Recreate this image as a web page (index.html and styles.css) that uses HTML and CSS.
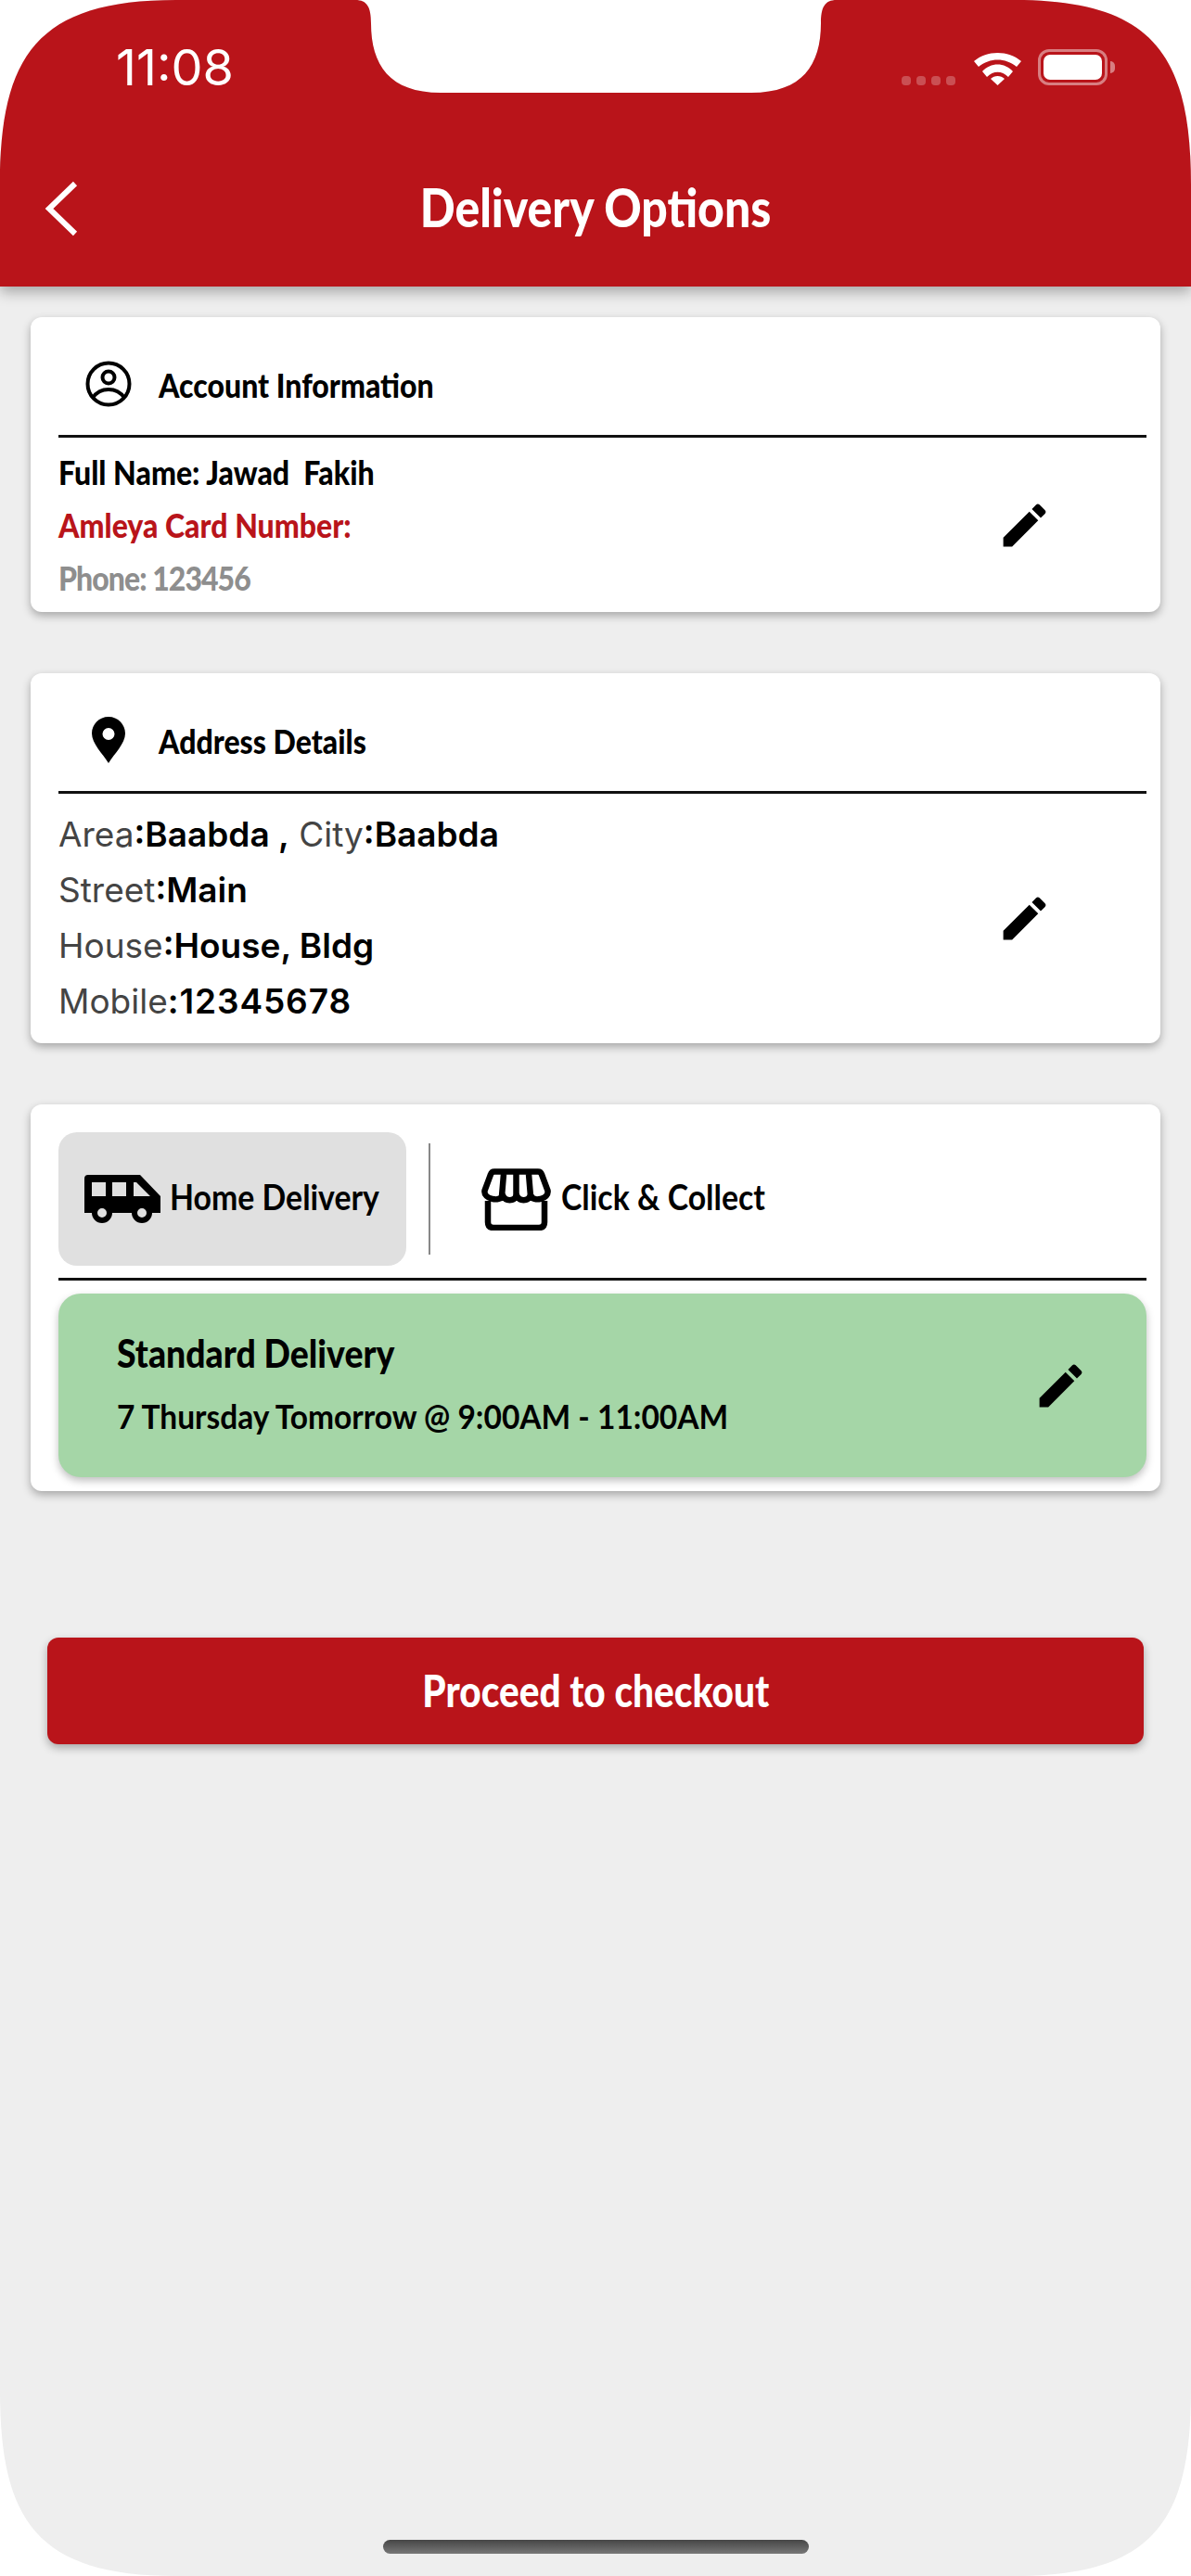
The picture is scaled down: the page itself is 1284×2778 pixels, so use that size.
FILE: index.html
```html
<!DOCTYPE html>
<html lang="en">
<head>
<meta charset="utf-8">
<title>Delivery Options</title>
<link rel="stylesheet" href="styles.css">
</head>
<body>
<div class="screen">
  <header class="topbar">
    <div class="status">
      <span class="time">11:08</span>
      <div class="status-icons">
        <div class="signal"><i></i><i></i><i></i><i></i></div>
        <svg class="wifi" viewBox="0 0 51 35"><path d="M0 9C14-3 37-3 51 9L46 15C34 5 17 5 5 15Z" fill="#fff"/><path d="M9 20C18 10 33 10 42 20L37 26C30 19 21 19 14 26Z" fill="#fff"/><path d="M18 28C22 24 29 24 33 28L25.500 35Z" fill="#fff"/></svg>
        <div class="battery"><div class="battery-fill"></div></div>
      </div>
    </div>
    <div class="navrow">
      <svg class="back" viewBox="0 0 36 60"><path d="M33 3L5 30l28 27" fill="none" stroke="#fff" stroke-width="6"/></svg>
      <h1 class="title">Delivery Options</h1>
    </div>
  </header>

  <main class="content">
    <section class="card card-account">
      <div class="card-head">
        <svg class="head-icon" viewBox="0 0 50 50"><circle cx="25" cy="25" r="22.500" fill="none" stroke="#000" stroke-width="4"/><circle cx="25" cy="18" r="6.500" fill="none" stroke="#000" stroke-width="4"/><path d="M8 40c4-6 10-9 17-9s13 3 17 9" fill="none" stroke="#000" stroke-width="4"/></svg>
        <h2 class="card-title condensed">Account Information</h2>
      </div>
      <div class="card-body">
        <div class="rows account-rows">
          <p class="acct condensed">Full Name: Jawad&nbsp; Fakih</p>
          <p class="acct acct-red condensed">Amleya Card Number:</p>
          <p class="acct acct-gray condensed">Phone: 123456</p>
        </div>
        <svg class="pencil" viewBox="0 0 24 24"><path d="M3 17.25V21h3.75L17.81 9.94l-3.75-3.75L3 17.25zM20.71 7.04a1 1 0 0 0 0-1.41l-2.34-2.34a1 1 0 0 0-1.41 0l-1.83 1.83 3.75 3.75 1.83-1.83z"/></svg>
      </div>
    </section>

    <section class="card card-address">
      <div class="card-head">
        <svg class="head-icon pin" viewBox="0 0 36 50"><path fill-rule="evenodd" d="M18 0C8 0 0 8 0 18c0 11 12 22 18 32 6-10 18-21 18-32C36 8 28 0 18 0zm0 12a6.500 6.500 0 1 1 0 13 6.500 6.500 0 0 1 0-13z"/></svg>
        <h2 class="card-title condensed">Address Details</h2>
      </div>
      <div class="card-body">
        <div class="rows address-rows">
          <p class="addr">Area<b>:Baabda ,</b> City<b>:Baabda</b></p>
          <p class="addr">Street<b>:Main</b></p>
          <p class="addr">House<b>:House, Bldg</b></p>
          <p class="addr">Mobile<b class="addr-num">:12345678</b></p>
        </div>
        <svg class="pencil" viewBox="0 0 24 24"><path d="M3 17.25V21h3.75L17.81 9.94l-3.75-3.75L3 17.25zM20.71 7.04a1 1 0 0 0 0-1.41l-2.34-2.34a1 1 0 0 0-1.41 0l-1.83 1.83 3.75 3.75 1.83-1.83z"/></svg>
      </div>
    </section>

    <section class="card card-delivery">
      <div class="tabs">
        <div class="tab tab-active">
          <svg class="truck" viewBox="0 0 82 52"><path fill-rule="evenodd" d="M4 0H60L82 23V41H0V4Q0 0 4 0ZM8 8V23H23V8ZM30 8V23H45V8ZM53 8V23H71L56 8Z"/><circle cx="19" cy="41" r="8" fill="#e0e0e0" stroke="#000" stroke-width="6"/><circle cx="62" cy="41" r="8" fill="#e0e0e0" stroke="#000" stroke-width="6"/></svg>
          <span class="tab-label condensed">Home Delivery</span>
        </div>
        <div class="tab-sep"></div>
        <div class="tab tab-plain">
          <svg class="store" viewBox="0 0 75 67"><g fill="none" stroke="#000" stroke-width="6.500" stroke-linejoin="round"><path d="M14 3.500H61Q64 3.500 65 6.500L71.500 24C73 33 56 37 53 29C50 36 41 36 38 29C35 36 26 36 23 29C20 37 2 33 3.500 24L10 6.500Q11 3.500 14 3.500Z"/><path d="M24 6L22 30M37.500 6V30M51 6L53 30"/><path d="M7 35V58Q7 64 13 64H62Q68 64 68 58V35"/></g></svg>
          <span class="tab-label condensed">Click &amp; Collect</span>
        </div>
      </div>
      <div class="slot">
        <div class="slot-text">
          <p class="slot-name condensed">Standard Delivery</p>
          <p class="slot-time condensed">7 Thursday Tomorrow @ 9:00AM - 11:00AM</p>
        </div>
        <svg class="pencil" viewBox="0 0 24 24"><path d="M3 17.25V21h3.75L17.81 9.94l-3.75-3.75L3 17.25zM20.71 7.04a1 1 0 0 0 0-1.41l-2.34-2.34a1 1 0 0 0-1.41 0l-1.83 1.83 3.75 3.75 1.83-1.83z"/></svg>
      </div>
    </section>

    <button class="checkout"><span class="checkout-label">Proceed to checkout</span></button>
  </main>
  <div class="home-bar"></div>
</div>
</body>
</html>
```
FILE: styles.css
```css
* { box-sizing: border-box; }
html, body { margin: 0; padding: 0; background: #fff; }
p, h1, h2 { margin: 0; }

.screen {
  position: relative;
  width: 1284px;
  height: 2778px;
  background: #eee;
  overflow: hidden;
  clip-path: path("M0 200C0 60 40 0 190 0H383C396 0 400 8 400 25C400 70 420 100 475 100H810C865 100 885 70 885 25C885 8 889 0 902 0H1094C1244 0 1284 60 1284 200V2578C1284 2718 1244 2778 1094 2778H190C40 2778 0 2718 0 2578Z");
  font-family: "Lato", "Liberation Sans", sans-serif;
}

.condensed {
  transform: scaleX(.89);
  transform-origin: left center;
  white-space: nowrap;
}

.topbar {
  position: relative;
  height: 309px;
  background: #b9141a;
  box-shadow: 0 6px 14px rgba(0,0,0,.3);
  color: #fff;
}
.status {
  display: flex;
  justify-content: space-between;
  align-items: center;
  height: 92px;
  padding: 53px 90px 0 125px;
}
.time { font-family: "Inter", sans-serif; font-size: 54px; font-weight: 400; line-height: 39px; }
.status-icons { display: flex; align-items: center; }
.signal { display: flex; gap: 6px; align-self: flex-end; margin-right: 20px; }
.signal i { width: 10px; height: 10px; border-radius: 4px; background: rgba(255,255,255,.25); }
.wifi { width: 51px; height: 35px; margin-right: 18px; margin-top: 4px; }
.battery {
  position: relative;
  width: 75px;
  height: 39px;
  border: 3px solid rgba(255,255,255,.45);
  border-radius: 12px;
  padding: 3px;
}
.battery::after {
  content: "";
  position: absolute;
  right: -11px;
  top: 10px;
  width: 5px;
  height: 13px;
  border-radius: 0 6px 6px 0;
  background: rgba(255,255,255,.45);
}
.battery-fill { height: 100%; background: #fff; border-radius: 7px; }

.navrow {
  position: relative;
  display: flex;
  justify-content: center;
  align-items: center;
  height: 70px;
  margin-top: 93px;
}
.back { position: absolute; left: 48px; top: 10px; width: 36px; height: 60px; }
.title { font-size: 58px; font-weight: 900; line-height: 70px; padding-top: 6px; transform: scaleX(.86); white-space: nowrap; }

.content {
  display: flex;
  flex-direction: column;
  padding: 33px 33px 0;
}
.card {
  display: flex;
  flex-direction: column;
  background: #fff;
  border-radius: 12px;
  box-shadow: 0 4px 10px rgba(0,0,0,.3);
  padding: 0 15px 0 30px;
}
.card-account { height: 318px; }
.card-address { height: 399px; margin-top: 66px; }
.card-delivery { height: 417px; margin-top: 66px; padding-top: 30px; }

.card-head {
  display: flex;
  align-items: center;
  flex: none;
  height: 130px;
  padding: 13px 0 0 29px;
  border-bottom: 3px solid #111;
}
.head-icon { width: 50px; height: 50px; margin: 4px 29px 0 0; flex: none; }
.head-icon.pin { width: 36px; margin-left: 7px; margin-right: 36px; }
.card-title { font-size: 36px; font-weight: 900; color: #000; padding-top: 6px; }
.card-body { display: flex; flex: 1; align-items: center; justify-content: space-between; padding-right: 101px; }
.rows { align-self: flex-start; }
.account-rows { padding-top: 9px; }
.acct { font-size: 36px; font-weight: 900; line-height: 57px; color: #000; }
.acct-red { color: #b9141a; }
.acct-gray { color: #8e8e8e; letter-spacing: -1.1px; }
.address-rows { padding-top: 14px; }
.addr { font-family: "Inter", sans-serif; font-size: 37px; line-height: 60px; color: #444; }
.addr b { font-weight: 600; color: #000; }
.addr .addr-num { letter-spacing: .9px; }
.pencil { width: 61px; height: 61px; flex: none; fill: #000; }

.tabs { display: flex; flex: none; align-items: center; height: 160px; border-bottom: 3px solid #111; padding-bottom: 13px; }
.tab { display: flex; align-items: center; }
.tab-active { width: 375px; height: 144px; background: #e0e0e0; border-radius: 20px; padding-left: 28px; }
.tab-sep { width: 2px; height: 120px; background: #888; margin: 0 55px 0 24px; }
.truck { width: 82px; height: 52px; margin-right: 10px; flex: none; }
.store { width: 75px; height: 67px; margin-right: 11px; flex: none; }
.tab-label { font-size: 38px; font-weight: 700; color: #000; padding-bottom: 6px; }

.slot {
  display: flex;
  flex: none;
  align-items: center;
  justify-content: space-between;
  height: 198px;
  margin-top: 14px;
  padding: 0 62px 0 63px;
  background: #a5d6a7;
  border-radius: 24px;
  box-shadow: 0 4px 8px rgba(0,0,0,.25);
}
.slot-text { padding-bottom: 3px; }
.slot-name { font-size: 42px; font-weight: 900; line-height: 50px; color: #000; }
.slot-time { font-size: 37px; font-weight: 700; line-height: 50px; margin-top: 18px; color: #000; transform: scaleX(.905); }

.checkout {
  align-self: center;
  width: 1182px;
  height: 115px;
  margin-top: 158px;
  padding: 0 0 3px;
  background: #b9141a;
  color: #fff;
  border: 0;
  border-radius: 12px;
  box-shadow: 0 4px 10px rgba(0,0,0,.3);
  font-family: inherit;
  font-size: 48px;
  font-weight: 900;
}
.checkout-label { display: inline-block; transform: scaleX(.845); white-space: nowrap; }

.home-bar {
  position: absolute;
  left: 413px;
  top: 2739px;
  width: 459px;
  height: 15px;
  border-radius: 8px;
  background: linear-gradient(180deg, #464646, #777);
}
```
